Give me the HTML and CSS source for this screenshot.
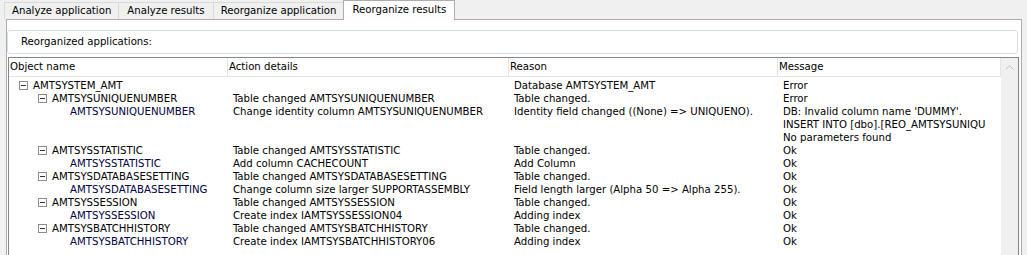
FILE: index.html
```html
<!DOCTYPE html>
<html lang="en">
<head>
    <meta charset="UTF-8">
    <title>Reorganize results</title>
    <link rel="stylesheet" href="styles.css">
</head>
<body>
    <div class="tabs">
        <div class="tab">Analyze application</div>
        <div class="tab">Analyze results</div>
        <div class="tab">Reorganize application</div>
        <div class="tab active">Reorganize results</div>
    </div>
    <div class="panel">
        <div class="group">Reorganized applications:</div>
        <div class="list">
            <div class="grid">
                <div class="head">
                    <div class="col">Object name</div>
                    <div class="col">Action details</div>
                    <div class="col">Reason</div>
                    <div class="col">Message</div>
                </div>
                <div class="row">
                    <div class="name lvl1"><span class="toggle"></span>AMTSYSTEM_AMT</div>
                    <div></div>
                    <div>Database AMTSYSTEM_AMT</div>
                    <div>Error</div>
                </div>
                <div class="row">
                    <div class="name lvl2"><span class="toggle"></span>AMTSYSUNIQUENUMBER</div>
                    <div>Table changed AMTSYSUNIQUENUMBER</div>
                    <div>Table changed.</div>
                    <div>Error</div>
                </div>
                <div class="row">
                    <div class="name lvl3">AMTSYSUNIQUENUMBER</div>
                    <div>Change identity column AMTSYSUNIQUENUMBER</div>
                    <div>Identity field changed ((None) =&gt; UNIQUENO).</div>
                    <div class="msg">DB: Invalid column name 'DUMMY'.<br>INSERT INTO [dbo].[REO_AMTSYSUNIQU<br>No parameters found</div>
                </div>
                <div class="row">
                    <div class="name lvl2"><span class="toggle"></span>AMTSYSSTATISTIC</div>
                    <div>Table changed AMTSYSSTATISTIC</div>
                    <div>Table changed.</div>
                    <div>Ok</div>
                </div>
                <div class="row">
                    <div class="name lvl3">AMTSYSSTATISTIC</div>
                    <div>Add column CACHECOUNT</div>
                    <div>Add Column</div>
                    <div>Ok</div>
                </div>
                <div class="row">
                    <div class="name lvl2"><span class="toggle"></span>AMTSYSDATABASESETTING</div>
                    <div>Table changed AMTSYSDATABASESETTING</div>
                    <div>Table changed.</div>
                    <div>Ok</div>
                </div>
                <div class="row">
                    <div class="name lvl3">AMTSYSDATABASESETTING</div>
                    <div>Change column size larger SUPPORTASSEMBLY</div>
                    <div>Field length larger (Alpha 50 =&gt; Alpha 255).</div>
                    <div>Ok</div>
                </div>
                <div class="row">
                    <div class="name lvl2"><span class="toggle"></span>AMTSYSSESSION</div>
                    <div>Table changed AMTSYSSESSION</div>
                    <div>Table changed.</div>
                    <div>Ok</div>
                </div>
                <div class="row">
                    <div class="name lvl3">AMTSYSSESSION</div>
                    <div>Create index IAMTSYSSESSION04</div>
                    <div>Adding index</div>
                    <div>Ok</div>
                </div>
                <div class="row">
                    <div class="name lvl2"><span class="toggle"></span>AMTSYSBATCHHISTORY</div>
                    <div>Table changed AMTSYSBATCHHISTORY</div>
                    <div>Table changed.</div>
                    <div>Ok</div>
                </div>
                <div class="row">
                    <div class="name lvl3">AMTSYSBATCHHISTORY</div>
                    <div>Create index IAMTSYSBATCHHISTORY06</div>
                    <div>Adding index</div>
                    <div>Ok</div>
                </div>
            </div>
            <div class="scrollbar">
                <svg class="arrow" width="9" height="5" viewBox="0 0 9 5"><path d="M0.5 4.5 L4.5 0.8 L8.5 4.5" fill="none" stroke="#c2c2c2" stroke-width="1"/></svg>
            </div>
        </div>
    </div>
</body>
</html>
```

FILE: styles.css
```css
body {
    margin: 0;
    background-color: #f0f0f0;
    font-family: 'DejaVu Sans Condensed', 'DejaVu Sans', sans-serif;
    font-size: 11.3px;
    color: #000;
    height: 255px;
    overflow: hidden;
}
.tabs {
    display: flex;
    align-items: flex-end;
    padding-left: 4px;
    height: 19px;
}
.tab {
    height: 16px;
    line-height: 16px;
    padding: 0 7px;
    border: 1px solid #d9d9d9;
    border-bottom: none;
    margin-right: -1px;
    background-color: #f0f0f0;
}
.tab:nth-child(2) {
    padding: 0 8px;
}
.tab.active {
    height: 19px;
    line-height: 18px;
    background-color: #fff;
    border-color: #adadad;
    margin-bottom: -1px;
    position: relative;
    z-index: 1;
    padding: 0 8px;
}
.panel {
    margin: 0 5px 0 6px;
    border: 1px solid #adadad;
    border-bottom: none;
    background-color: #fff;
    height: 226px;
    padding: 10px 2px 0 0;
}
.group {
    height: 22px;
    line-height: 22px;
    border: 1px solid #d5dfe5;
    border-radius: 3px;
    padding-left: 13px;
    margin-right: 1px;
}
.list {
    display: flex;
    margin: 3px 0 0 1px;
    border: 1px solid #828790;
    border-bottom: none;
    height: 197px;
    overflow: hidden;
}
.grid {
    flex: 1;
    display: grid;
    grid-template-columns: 219px 281px 269px 1fr;
    align-content: start;
    overflow: hidden;
}
.head, .row {
    display: contents;
}
.head .col {
    height: 18px;
    line-height: 18px;
    padding-left: 1px;
    border-right: 1px solid #e5e5e5;
    border-bottom: 1px solid #e5e5e5;
}
.row > div {
    line-height: 13px;
    padding-left: 5px;
    white-space: nowrap;
    overflow: hidden;
}
.row:nth-child(2) > div {
    padding-top: 2px;
}
.name {
    display: flex;
    align-items: flex-start;
}
.lvl1 {
    padding-left: 10px !important;
}
.lvl2 {
    padding-left: 29px !important;
}
.lvl3 {
    padding-left: 61px !important;
    color: #000040;
}
.toggle {
    width: 7px;
    height: 7px;
    border: 1px solid #8c8c8c;
    margin: 2px 5px 0 0;
    position: relative;
    background-color: #fff;
    flex-shrink: 0;
}
.toggle::after {
    content: '';
    position: absolute;
    left: 1px;
    top: 3px;
    width: 5px;
    height: 1px;
    background-color: #333;
}
.scrollbar {
    width: 17px;
    background-color: #f0f0f0;
    display: flex;
    justify-content: center;
}
.arrow {
    margin-top: 7px;
}
```
